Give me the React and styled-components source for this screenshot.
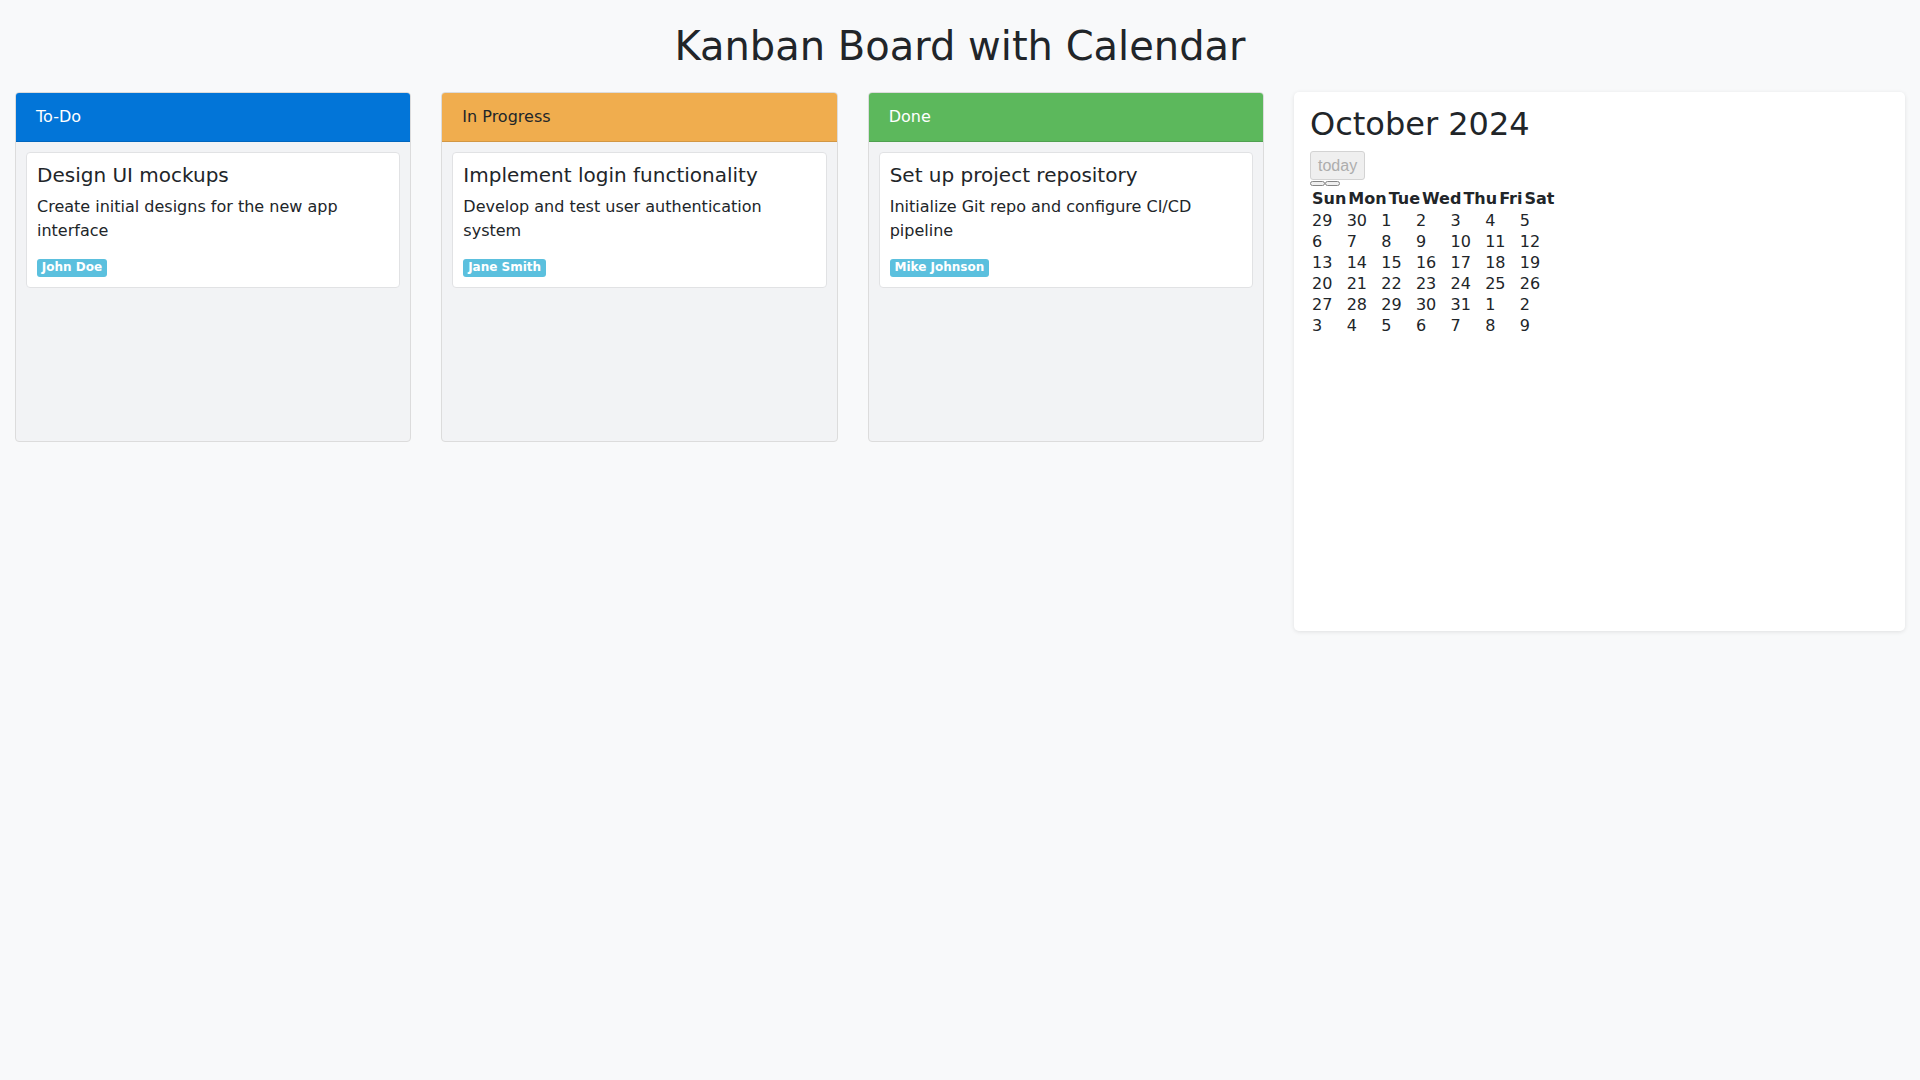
import React from "react";
import styled, { createGlobalStyle } from "styled-components";

const GlobalStyle = createGlobalStyle`
  * {
    box-sizing: border-box;
  }
  body {
    margin: 0;
    background: #f8f9fa;
    color: #212529;
    font-family: "DejaVu Sans", sans-serif;
    font-size: 16px;
    line-height: 1.5;
  }
`;

const columns = [
  {
    id: "todo",
    title: "To-Do",
    bg: "#0275d8",
    fg: "#ffffff",
    tasks: [
      {
        id: 1,
        title: "Design UI mockups",
        description: "Create initial designs for the new app interface",
        assignee: "John Doe",
      },
    ],
  },
  {
    id: "progress",
    title: "In Progress",
    bg: "#f0ad4e",
    fg: "#212529",
    tasks: [
      {
        id: 2,
        title: "Implement login functionality",
        description: "Develop and test user authentication system",
        assignee: "Jane Smith",
      },
    ],
  },
  {
    id: "done",
    title: "Done",
    bg: "#5cb85c",
    fg: "#ffffff",
    tasks: [
      {
        id: 3,
        title: "Set up project repository",
        description: "Initialize Git repo and configure CI/CD pipeline",
        assignee: "Mike Johnson",
      },
    ],
  },
];

const weekDays = ["Sun", "Mon", "Tue", "Wed", "Thu", "Fri", "Sat"];

// October 2024 month grid, starting on Sunday Sep 29
const buildDays = () => {
  const days = [];
  const start = new Date(2024, 8, 29);
  for (let i = 0; i < 42; i++) {
    const d = new Date(start);
    d.setDate(start.getDate() + i);
    days.push({ key: d.toISOString(), label: d.getDate() });
  }
  return days;
};

const App = () => {
  const days = buildDays();
  return (
    <>
      <GlobalStyle />
      <Page>
        <Title>Kanban Board with Calendar</Title>
        <Board>
          {columns.map((col) => (
            <Column key={col.id}>
              <ColumnHeader $bg={col.bg} $fg={col.fg}>
                {col.title}
              </ColumnHeader>
              <ColumnBody>
                {col.tasks.map((task) => (
                  <TaskCard key={task.id}>
                    <TaskTitle>{task.title}</TaskTitle>
                    <TaskText>{task.description}</TaskText>
                    <BadgeRow>
                      <Badge>{task.assignee}</Badge>
                    </BadgeRow>
                  </TaskCard>
                ))}
              </ColumnBody>
            </Column>
          ))}
          <CalendarPanel>
            <MonthTitle>October 2024</MonthTitle>
            <TodayButton disabled>today</TodayButton>
            <NavRow>
              <NavButton aria-label="prev" />
              <NavButton aria-label="next" />
            </NavRow>
            <MonthGrid>
              <WeekHeader>
                {weekDays.map((d) => (
                  <WeekDay key={d}>{d}</WeekDay>
                ))}
              </WeekHeader>
              <DaysGrid>
                {days.map((d) => (
                  <DayCell key={d.key}>{d.label}</DayCell>
                ))}
              </DaysGrid>
            </MonthGrid>
          </CalendarPanel>
        </Board>
      </Page>
    </>
  );
};

const Page = styled.div`
  padding: 22px 15px 20px;
`;

const Title = styled.h1`
  margin: 0 0 22px;
  font-size: 40px;
  font-weight: 400;
  line-height: 1.2;
  text-align: center;
`;

const Board = styled.div`
  display: grid;
  grid-template-columns: repeat(3, 1fr) 611px;
  column-gap: 30px;
  align-items: start;
`;

const Column = styled.div`
  min-height: 350px;
  background: #f2f3f5;
  border: 1px solid #dcdcdc;
  border-radius: 4px;
  overflow: hidden;
`;

const ColumnHeader = styled.div`
  padding: 12px 20px;
  background: ${(p) => p.$bg};
  color: ${(p) => p.$fg};
  border-bottom: 1px solid rgba(0, 0, 0, 0.125);
  line-height: 24px;
`;

const ColumnBody = styled.div`
  display: flex;
  flex-direction: column;
  gap: 10px;
  padding: 10px;
`;

const TaskCard = styled.div`
  background: #ffffff;
  border: 1px solid #e1e2e4;
  border-radius: 4px;
  padding: 10px;
`;

const TaskTitle = styled.h5`
  margin: 0 0 8px;
  font-size: 20px;
  font-weight: 400;
  line-height: 1.2;
`;

const TaskText = styled.p`
  margin: 0 0 16px;
`;

const BadgeRow = styled.div`
  display: flex;
`;

const Badge = styled.span`
  display: inline-block;
  padding: 0.2em 0.4em 0.3em;
  font-size: 12px;
  font-weight: 700;
  line-height: 1;
  color: #ffffff;
  background: #5bc0de;
  border-radius: 3px;
`;

const CalendarPanel = styled.div`
  min-height: 539px;
  background: #ffffff;
  border-radius: 5px;
  box-shadow: 0 1px 4px rgba(0, 0, 0, 0.1);
  padding: 15px 16px;
  display: flex;
  flex-direction: column;
  align-items: flex-start;
`;

const MonthTitle = styled.h2`
  margin: 0 0 9px;
  font-size: 32px;
  font-weight: 400;
  line-height: 1.1;
`;

const TodayButton = styled.button`
  font-family: "Liberation Sans", Arial, sans-serif;
  font-size: 16px;
  line-height: 18px;
  height: 29px;
  padding: 4px 7px;
  color: #adadad;
  background: #efefef;
  border: 1px solid #d3d3d3;
  border-radius: 3px;
`;

const NavRow = styled.div`
  display: flex;
  margin-top: 1px;
`;

const NavButton = styled.button`
  width: 15px;
  height: 5px;
  padding: 0;
  background: #efefef;
  border: 1px solid #858585;
  border-radius: 3px;
`;

const MonthGrid = styled.div`
  display: flex;
  flex-direction: column;
  width: max-content;
  margin-top: 3px;
  padding-left: 2px;
`;

const WeekHeader = styled.div`
  display: flex;
  gap: 2px;
`;

const WeekDay = styled.span`
  font-weight: 700;
  line-height: 19px;
`;

const DaysGrid = styled.div`
  display: grid;
  grid-template-columns: repeat(7, 1fr);
  grid-auto-rows: 21px;
  margin-top: 2px;
`;

const DayCell = styled.span`
  line-height: 21px;
`;

export default App;
